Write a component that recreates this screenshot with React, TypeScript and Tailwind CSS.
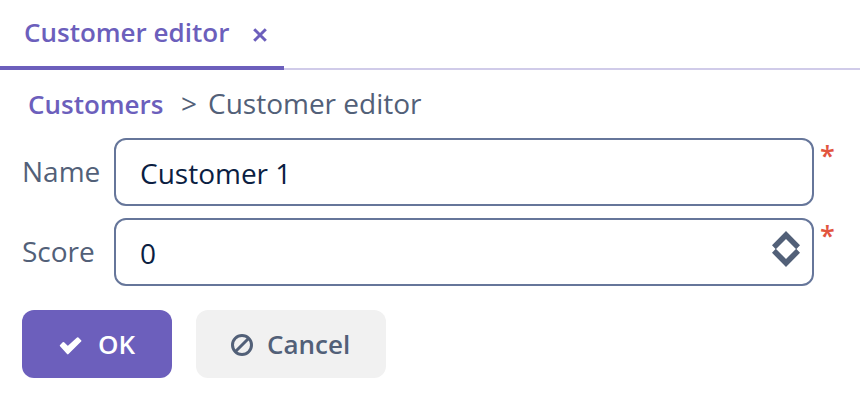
import React from "react";

function Field({ label, value, children }: { label: string; value: string; children?: React.ReactNode }) {
  return (
    <div className="flex h-[68px]">
      <div className="w-[92px] pt-[14px] text-[28px] leading-[38px] text-[#526078]">{label}</div>
      <div className="flex w-[700px] items-center justify-between rounded-[12px] border-2 border-[#66769a] bg-white pl-[24px] pr-[12px] text-[28px] leading-[38px] text-[#0b1e42]">
        <span className="pt-[2px]">{value}</span>
        {children}
      </div>
      <div className="-mt-px pl-[6px] text-[27px] font-semibold leading-[38px] text-[#e2553f]">*</div>
    </div>
  );
}

export default function App() {
  return (
    <div className="h-[404px] w-[860px] overflow-hidden bg-white font-['Open_Sans',sans-serif]">
      <div className="flex h-[70px] items-end">
        <div className="flex h-[70px] w-[284px] border-b-4 border-[#6c5fbc] pl-[24px] text-[26px] font-semibold leading-[36px] text-[#6c5fbc]">
          <span className="w-[229px] pt-[14px]">Customer editor</span>
          <svg className="mt-[28px] h-[14px] w-[14px]" viewBox="0 0 14 14" fill="none" stroke="#6c5fbc" strokeWidth="3">
            <path d="M1.2 1.2 12.8 12.8M12.8 1.2 1.2 12.8" />
          </svg>
        </div>
        <div className="h-[2px] flex-1 bg-[#d0cbe9]" />
      </div>
      <div className="flex h-[68px] pl-[28px] pt-[14px] text-[28px] leading-[38px] text-[#526078]">
        <span className="w-[152px] pt-px text-[26px] font-semibold text-[#6c5fbc]">Customers</span>
        <span className="w-[28px] pl-px">&gt;</span>
        <span>Customer editor</span>
      </div>
      <div className="flex flex-col gap-[12px] pl-[22px]">
        <Field label="Name" value="Customer 1" />
        <Field label="Score" value="0">
          <svg className="-mt-[6px] h-[36px] w-[28px]" viewBox="0 0 28 36" fill="#526078">
            <path d="M14 0 28 14.2 24.2 18.3 14 8 3.8 18.3 0 14.2Z" />
            <path d="M14 36 28 21.8 24.2 17.7 14 28 3.8 17.7 0 21.8Z" />
          </svg>
        </Field>
      </div>
      <div className="flex gap-[24px] pl-[22px] pt-[24px] text-[26px] font-semibold leading-[36px]">
        <button className="flex h-[68px] w-[150px] items-center rounded-[12px] bg-[#6c5fbc] pl-[37px] text-white">
          <svg className="mr-[16px] mt-[3px] h-[18px] w-[23px]" viewBox="0 0 23 18">
            <path
              fill="white"
              stroke="white"
              strokeWidth="2"
              strokeLinejoin="round"
              d="M1.8 8.6 4.4 6 8.8 10.3 18.7 1.2 21.4 3.9 8.8 16.4Z"
            />
          </svg>
          <span>OK</span>
        </button>
        <button className="flex h-[68px] w-[190px] items-center rounded-[12px] bg-[#f1f1f1] pl-[35px] text-[#526078]">
          <svg className="mr-[14px] mt-[2px] h-[22px] w-[22px]" viewBox="0 0 22 22" fill="none" stroke="#526078" strokeWidth="3">
            <circle cx="11" cy="11" r="9.5" />
            <path d="M4.5 17.5 17.5 4.5" />
          </svg>
          <span>Cancel</span>
        </button>
      </div>
    </div>
  );
}
